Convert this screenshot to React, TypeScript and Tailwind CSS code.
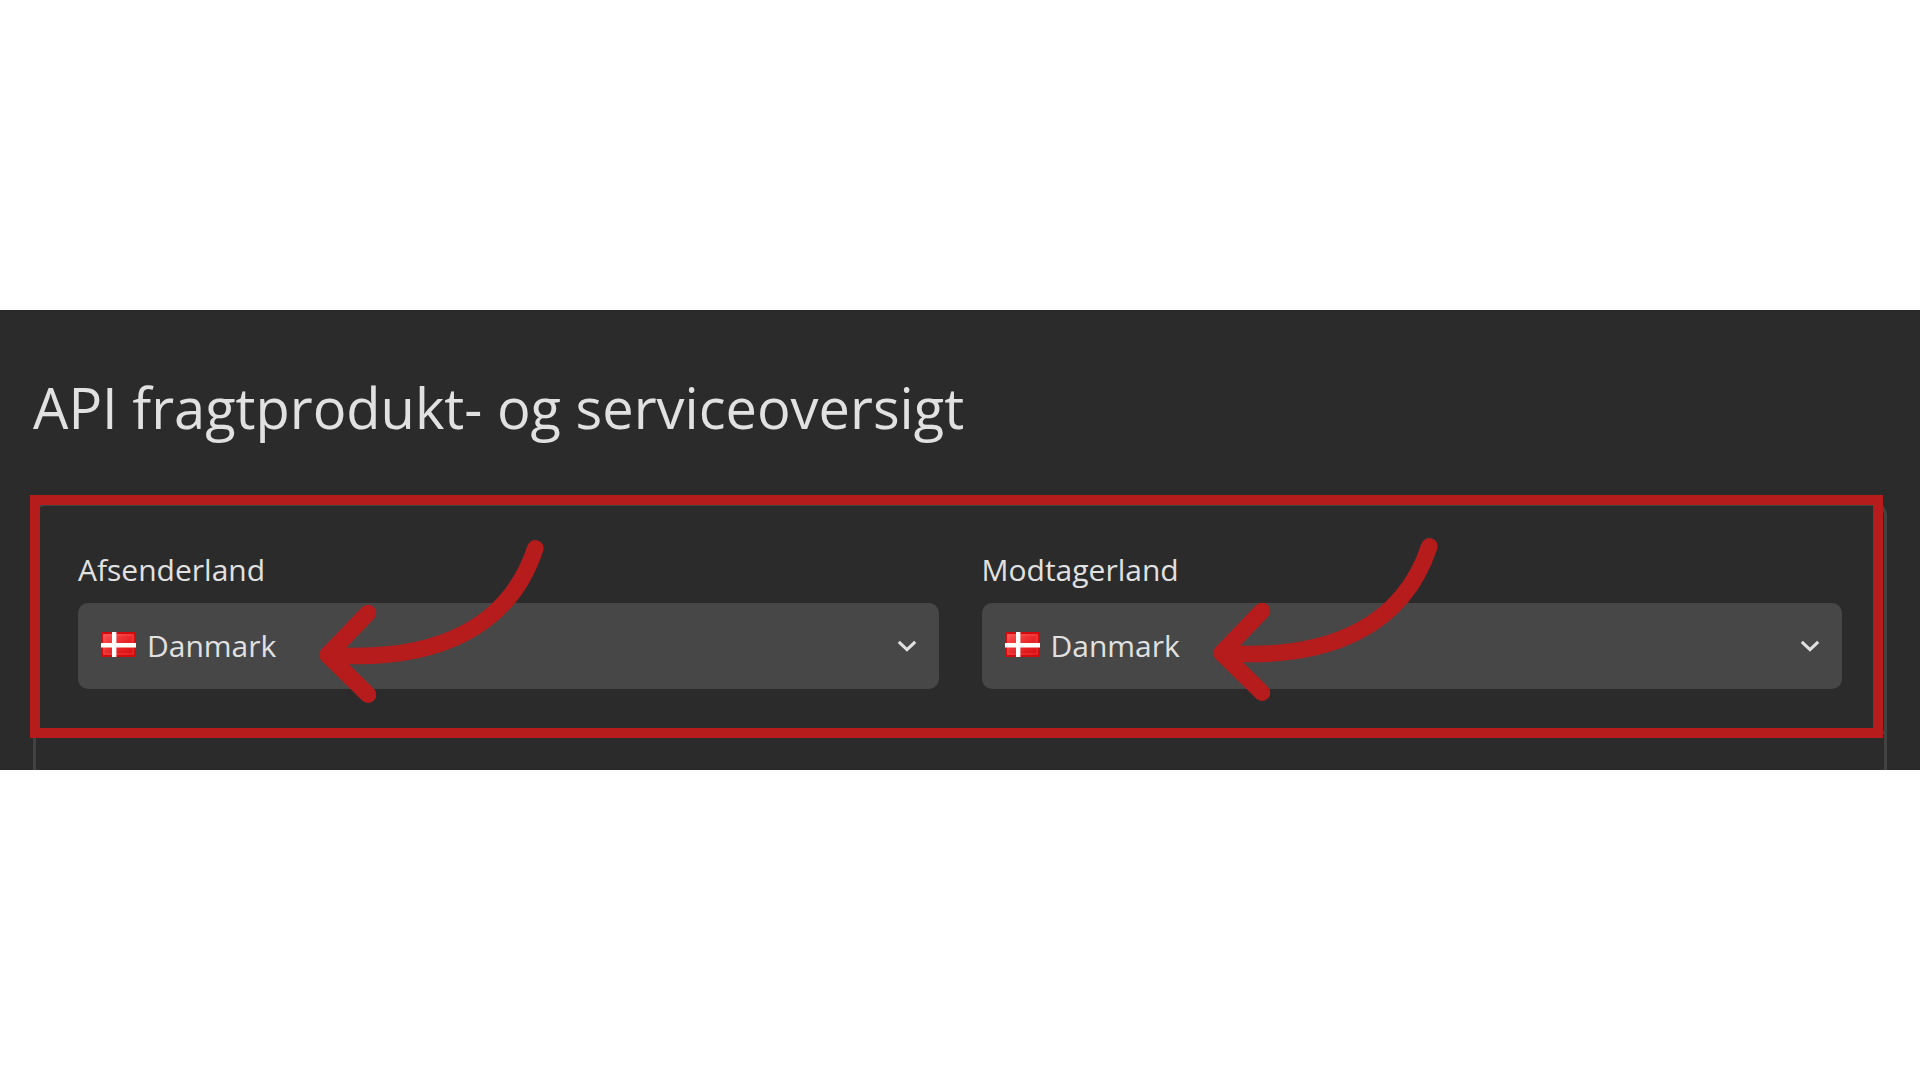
import React, { useState } from 'react';

const countries = ['Danmark', 'Sverige', 'Norge', 'Tyskland'];

function DanishFlag() {
  return (
    <svg
      viewBox="0 0 35 25"
      className="pointer-events-none absolute top-[29px] left-[23px] h-[25px] w-[35px]"
      aria-hidden="true"
    >
      <defs>
        <linearGradient id="flag-red" x1="0" y1="0" x2="1" y2="1">
          <stop offset="0" stopColor="#ff5252" />
          <stop offset="0.5" stopColor="#ea2a2c" />
          <stop offset="1" stopColor="#d90b0e" />
        </linearGradient>
      </defs>
      <rect width="35" height="25" fill="#d40a0c" />
      <rect x="2" y="2" width="31" height="21" fill="url(#flag-red)" />
      <rect x="3" y="3" width="29" height="19" fill="none" stroke="#ff7070" strokeOpacity="0.4" />
      <path d="M13.2 0V25M0 13.2H35" stroke="#fff" strokeWidth="4.4" />
    </svg>
  );
}

function Chevron() {
  return (
    <svg
      viewBox="0 0 20 12"
      className="pointer-events-none absolute top-1/2 right-[22px] h-3 w-5 -translate-y-1/2"
      fill="none"
      stroke="#e1e1e1"
      strokeWidth="3"
      aria-hidden="true"
    >
      <path d="M1.8 1.8L10 9.6L18.2 1.8" />
    </svg>
  );
}

function Arrow({ className }: { className: string }) {
  return (
    <svg
      viewBox="0 0 260 200"
      className={`pointer-events-none absolute z-10 h-[200px] w-[260px] ${className}`}
      fill="none"
      stroke="#b71c1c"
      strokeWidth="16.6"
      strokeLinecap="round"
      strokeLinejoin="round"
      aria-hidden="true"
    >
      <path d="M27.7 135C140 143 210 105 235.3 28.3" />
      <path d="M68 93L27.7 135L68 174.7" />
    </svg>
  );
}

interface CountryFieldProps {
  id: string;
  label: string;
  arrowClassName: string;
}

function CountryField({ id, label, arrowClassName }: CountryFieldProps) {
  const [country, setCountry] = useState('Danmark');

  return (
    <div className="relative flex min-w-0 flex-1 flex-col gap-[13px]">
      <label htmlFor={id} className="text-[30px] leading-10">
        {label}
      </label>
      <div className="relative">
        <DanishFlag />
        <select
          id={id}
          value={country}
          onChange={(e) => setCountry(e.target.value)}
          className="block h-[86px] w-full appearance-none rounded-[10px] bg-[#474747] pr-16 pl-[69px] text-[30px] leading-10 outline-none"
        >
          {countries.map((name) => (
            <option key={name} value={name}>
              {name}
            </option>
          ))}
        </select>
        <Chevron />
      </div>
      <Arrow className={arrowClassName} />
    </div>
  );
}

export default function App() {
  return (
    <div className="flex min-h-screen flex-col justify-center bg-white font-['Open_Sans',sans-serif]">
      <main className="bg-[#2b2b2b] px-[33px] pt-[61px] text-[#e1e1e1]">
        <h1 className="mb-[60px] text-[56px] leading-[72px]">
          API fragtprodukt- og serviceoversigt
        </h1>

        <div className="rounded-t-xl border-x-[3px] border-t-[3px] border-[#424242] pb-9">
          <section className="relative flex gap-[43px] border-b-[3px] border-[#424242] px-[42px] pt-11 pb-[42px]">
            <CountryField
              id="sender-country"
              label="Afsenderland"
              arrowClassName="-top-[30px] left-[222px]"
            />
            <CountryField
              id="receiver-country"
              label="Modtagerland"
              arrowClassName="-top-8 left-[212px]"
            />

            {/* Highlight around the country fields */}
            <div className="pointer-events-none absolute -top-[11px] right-[1px] -bottom-[7px] -left-[6px] border-[10px] border-[#b71c1c]" />
          </section>
        </div>
      </main>
    </div>
  );
}
